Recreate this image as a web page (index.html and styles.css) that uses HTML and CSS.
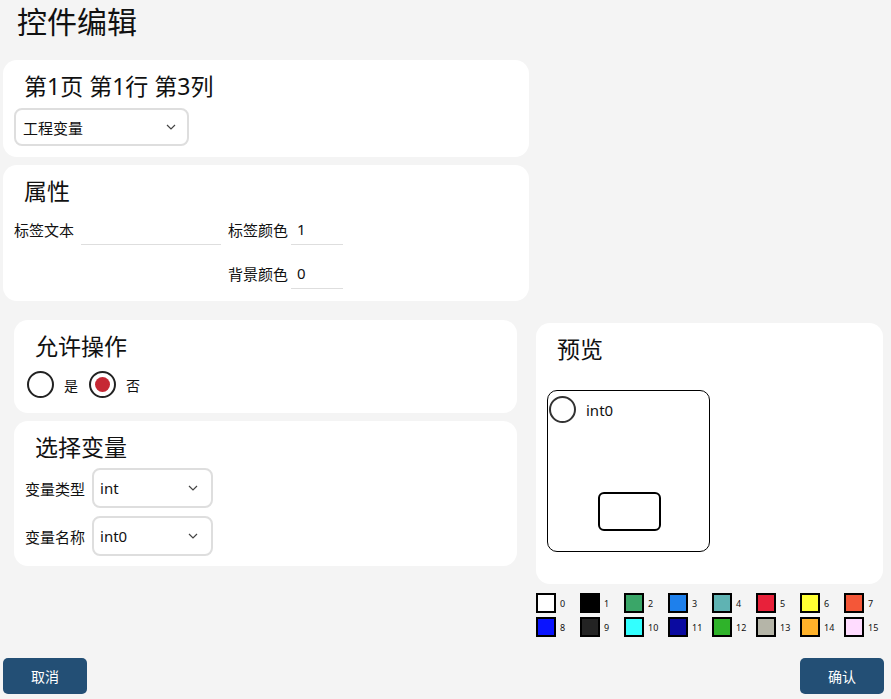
FILE: index.html
```html
<!DOCTYPE html>
<html lang="zh-CN">
<head>
    <meta charset="UTF-8">
    <meta name="viewport" content="width=device-width, initial-scale=1.0">
    <title>控件编辑</title>
    <link rel="stylesheet" href="styles.css">
</head>
<body>
    <div class="page">
        <h1 class="page-title">控件编辑</h1>

        <div class="top">
            <!-- Position -->
            <section class="card">
                <h2 class="card-title">第1页 第1行 第3列</h2>
                <div class="select select-type">
                    <span>工程变量</span>
                    <svg class="chevron" width="10" height="6" viewBox="0 0 10 6"><path d="M1 1l4 4 4-4" fill="none" stroke="#444" stroke-width="1.2"/></svg>
                </div>
            </section>

            <!-- Properties -->
            <section class="card">
                <h2 class="card-title">属性</h2>
                <div class="props">
                    <label>标签文本</label>
                    <div class="field"></div>
                    <label>标签颜色</label>
                    <div class="field">1</div>
                    <label class="col-3">背景颜色</label>
                    <div class="field">0</div>
                </div>
            </section>
        </div>

        <div class="lower">
            <div class="left-col">
                <!-- Allow operation -->
                <section class="card">
                    <h2 class="card-title">允许操作</h2>
                    <div class="radios">
                        <span class="radio"></span>
                        <span class="radio-label">是</span>
                        <span class="radio checked"></span>
                        <span class="radio-label">否</span>
                    </div>
                </section>

                <!-- Variable -->
                <section class="card">
                    <h2 class="card-title">选择变量</h2>
                    <div class="var-row">
                        <label>变量类型</label>
                        <div class="select select-var">
                            <span>int</span>
                            <svg class="chevron" width="10" height="6" viewBox="0 0 10 6"><path d="M1 1l4 4 4-4" fill="none" stroke="#444" stroke-width="1.2"/></svg>
                        </div>
                    </div>
                    <div class="var-row">
                        <label>变量名称</label>
                        <div class="select select-var">
                            <span>int0</span>
                            <svg class="chevron" width="10" height="6" viewBox="0 0 10 6"><path d="M1 1l4 4 4-4" fill="none" stroke="#444" stroke-width="1.2"/></svg>
                        </div>
                    </div>
                </section>
            </div>

            <div class="right-col">
                <section class="card preview-card">
                    <h2 class="card-title">预览</h2>
                    <div class="preview-box">
                        <div class="preview-head">
                            <span class="preview-dot"></span>
                            <span>int0</span>
                        </div>
                        <div class="preview-btn"></div>
                    </div>
                </section>

                <div class="swatches">
                    <div class="swatch-item"><span class="swatch c0"></span>0</div>
                    <div class="swatch-item"><span class="swatch c1"></span>1</div>
                    <div class="swatch-item"><span class="swatch c2"></span>2</div>
                    <div class="swatch-item"><span class="swatch c3"></span>3</div>
                    <div class="swatch-item"><span class="swatch c4"></span>4</div>
                    <div class="swatch-item"><span class="swatch c5"></span>5</div>
                    <div class="swatch-item"><span class="swatch c6"></span>6</div>
                    <div class="swatch-item"><span class="swatch c7"></span>7</div>
                    <div class="swatch-item"><span class="swatch c8"></span>8</div>
                    <div class="swatch-item"><span class="swatch c9"></span>9</div>
                    <div class="swatch-item"><span class="swatch c10"></span>10</div>
                    <div class="swatch-item"><span class="swatch c11"></span>11</div>
                    <div class="swatch-item"><span class="swatch c12"></span>12</div>
                    <div class="swatch-item"><span class="swatch c13"></span>13</div>
                    <div class="swatch-item"><span class="swatch c14"></span>14</div>
                    <div class="swatch-item"><span class="swatch c15"></span>15</div>
                </div>
            </div>
        </div>

        <div class="footer">
            <button class="btn">取消</button>
            <button class="btn">确认</button>
        </div>
    </div>
</body>
</html>
```

FILE: styles.css
```css
* {
    margin: 0;
    padding: 0;
    box-sizing: border-box;
}

body {
    font-family: "Noto Sans", "Noto Sans CJK SC", sans-serif;
    background: #f4f4f4;
    color: #111;
    width: 891px;
    height: 699px;
    overflow: hidden;
}

.page-title {
    font-size: 30px;
    font-weight: 400;
    line-height: 44px;
    height: 60px;
    padding-left: 17px;
}

.top {
    width: 526px;
    margin-left: 3px;
    display: flex;
    flex-direction: column;
    gap: 8px;
}

.card {
    background: #fff;
    border-radius: 14px;
    padding: 10px 11px 11px;
}

.card-title {
    font-size: 23px;
    font-weight: 400;
    line-height: 32px;
    padding-left: 10px;
}

/* selects */
.select {
    display: flex;
    align-items: center;
    justify-content: space-between;
    border: 2px solid #dedede;
    border-radius: 8px;
    font-size: 15px;
}

.select-type {
    width: 175px;
    height: 38px;
    margin-top: 6px;
    padding: 0 11px 0 7px;
}

.select-var {
    width: 121px;
    height: 40px;
    padding: 0 13px 0 6px;
}

/* properties */
.props {
    display: grid;
    grid-template-columns: 67px 147px 63px 52px;
    row-gap: 13px;
    align-items: center;
    margin-top: 7px;
    font-size: 15px;
}

.props .field {
    height: 31px;
    line-height: 30px;
    padding-left: 6px;
    border-bottom: 1px solid #dedede;
}

.props .field:nth-of-type(1) {
    width: 140px;
}

.props .col-3 {
    grid-column: 3;
}

.card:nth-child(2) {
    padding-bottom: 12px;
}

/* lower area */
.lower {
    display: flex;
    gap: 19px;
    margin-top: 19px;
    padding-left: 14px;
}

.left-col {
    width: 503px;
    display: flex;
    flex-direction: column;
    gap: 8px;
}

.right-col {
    width: 347px;
    margin-top: 3px;
}

.radios {
    display: flex;
    align-items: center;
    margin-top: 9px;
    padding: 0 2px 4px;
    font-size: 14px;
}

.radio {
    width: 27px;
    height: 27px;
    border: 2px solid #222;
    border-radius: 50%;
    display: flex;
    align-items: center;
    justify-content: center;
}

.radio.checked::after {
    content: "";
    width: 15px;
    height: 15px;
    border-radius: 50%;
    background: #c62834;
}

.radio-label {
    margin: 0 11px 0 10px;
}

.var-row {
    display: flex;
    align-items: center;
    gap: 7px;
    margin-top: 8px;
    font-size: 15px;
}

.var-row:first-of-type {
    margin-top: 5px;
}

.card:last-child .var-row:last-child {
    margin-bottom: -2px;
}

/* preview */
.preview-card {
    height: 261px;
}

.preview-box {
    width: 163px;
    height: 162px;
    margin-top: 25px;
    border: 1px solid #000;
    border-radius: 10px;
    padding: 5px 1px 20px;
    display: flex;
    flex-direction: column;
}

.preview-head {
    display: flex;
    align-items: center;
    gap: 10px;
    font-size: 15px;
}

.preview-dot {
    width: 27px;
    height: 27px;
    border: 2px solid #333;
    border-radius: 50%;
}

.preview-btn {
    width: 63px;
    height: 39px;
    margin: auto 0 0 49px;
    border: 2px solid #000;
    border-radius: 6px;
}

.swatches {
    display: grid;
    grid-template-columns: repeat(8, 44px);
    row-gap: 4px;
    margin-top: 9px;
}

.swatch-item {
    display: flex;
    align-items: center;
    gap: 4px;
    font-size: 9px;
}

.swatch {
    width: 20px;
    height: 20px;
    border: 2px solid #000;
}

.c0 { background: #ffffff; }
.c1 { background: #000000; }
.c2 { background: #3aa668; }
.c3 { background: #1e80ec; }
.c4 { background: #5fb3b3; }
.c5 { background: #e8213a; }
.c6 { background: #ffff33; }
.c7 { background: #f45738; }
.c8 { background: #0a14ff; }
.c9 { background: #232323; }
.c10 { background: #33ffff; }
.c11 { background: #0a0aa0; }
.c12 { background: #2fb32a; }
.c13 { background: #b5b5a8; }
.c14 { background: #ffb22a; }
.c15 { background: #ffdcff; }

.footer {
    display: flex;
    justify-content: space-between;
    margin-top: 21px;
    padding: 0 7px 0 3px;
}

.btn {
    width: 84px;
    height: 36px;
    background: #234f75;
    color: #fff;
    border: none;
    border-radius: 5px;
    font-family: inherit;
    font-size: 14px;
}
```
